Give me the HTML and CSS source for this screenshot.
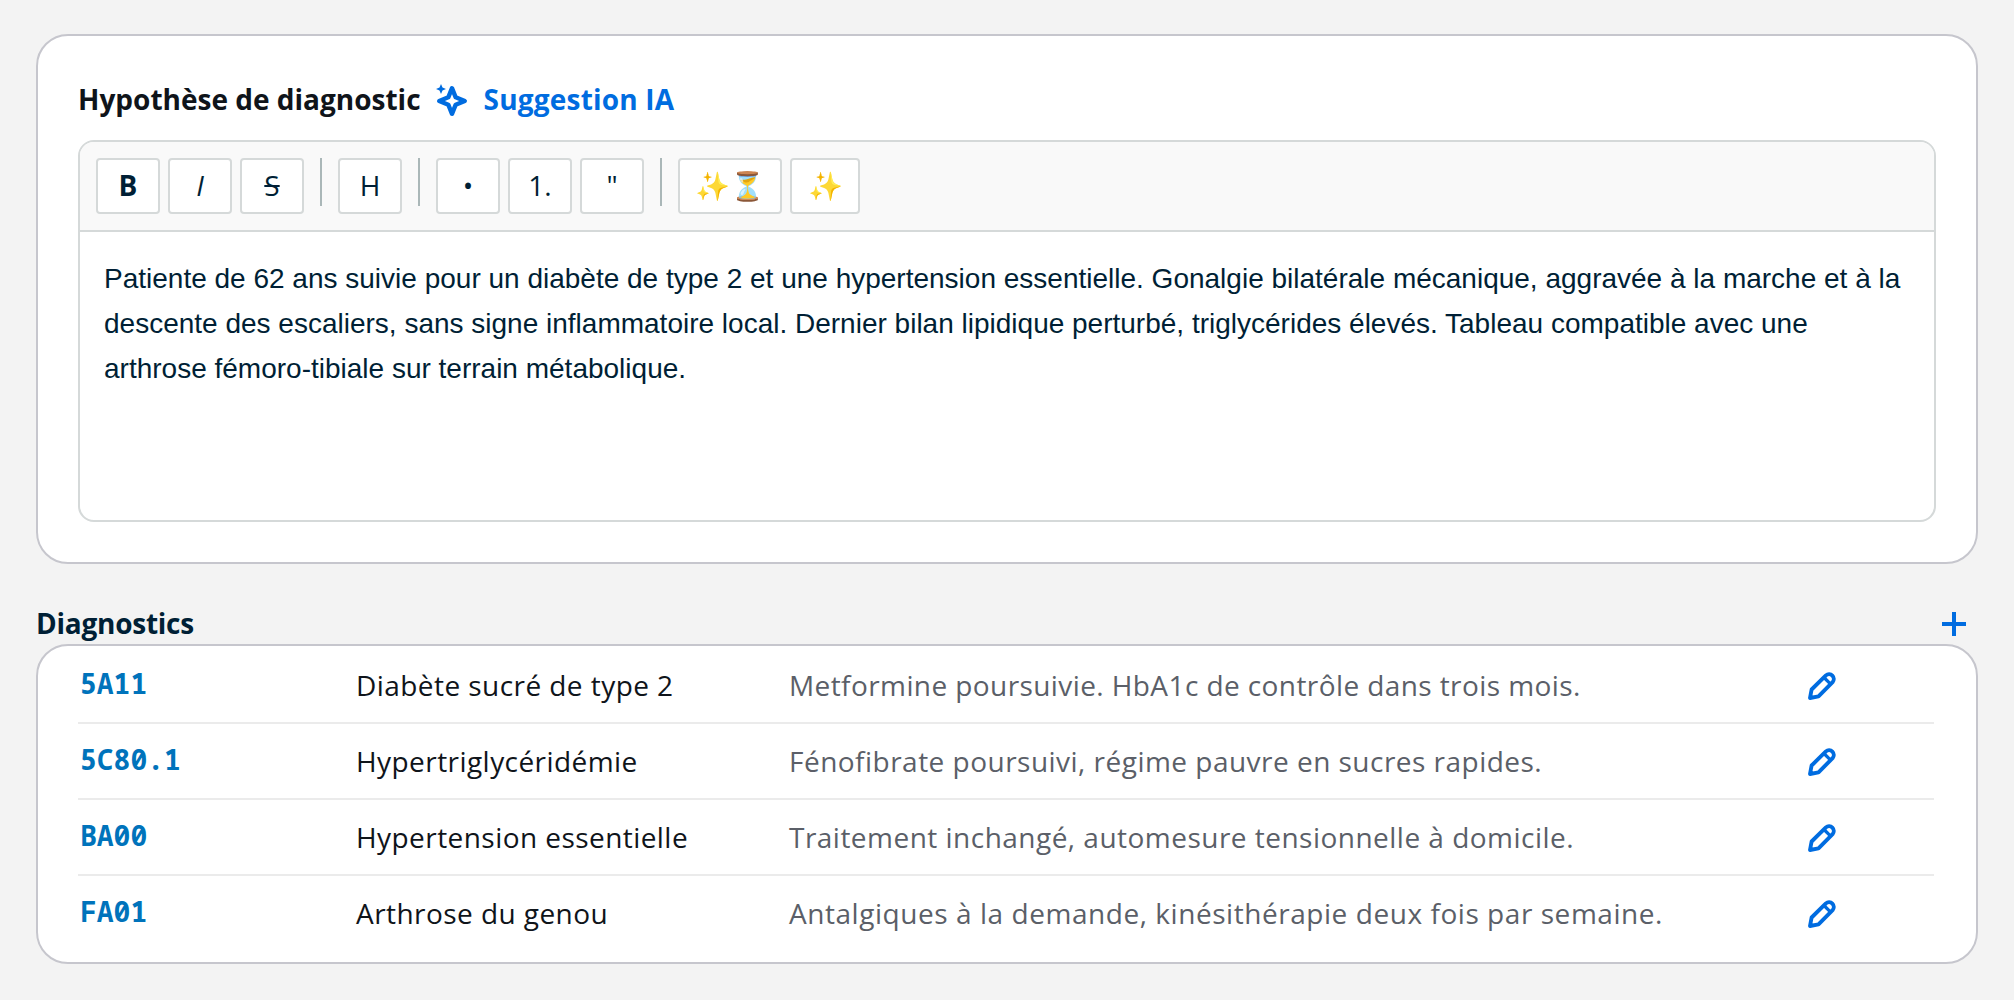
FILE: index.html
```html
<!DOCTYPE html>
<html lang="fr">
<head>
<meta charset="utf-8">
<title>Diagnostics</title>
<link rel="stylesheet" href="styles.css">
</head>
<body>
<svg class="defs" width="0" height="0">
  <symbol id="pencil" viewBox="0 0 28 28">
    <path d="M2 26l1.600-8.500L17.900 3.400a4.750 4.750 0 0 1 6.700 6.700L10.500 24.400z" fill="none" stroke="currentColor" stroke-width="3.900" stroke-linejoin="round"/>
    <path d="M16 5.500l6.600 6.600" fill="none" stroke="currentColor" stroke-width="3.200"/>
  </symbol>
</svg>
<section class="card hypothesis">
  <header class="hypothesis-head">
    <h2 class="title">Hypothèse de diagnostic</h2>
    <button class="suggest">
      <svg class="sparkle" viewBox="0 0 32 34"><path d="M16 4.200l3.700 9.100 9.100 3.700-9.100 3.700L16 29.800l-3.700-9.100L3.200 17l9.100-3.700z" fill="none" stroke="currentColor" stroke-width="4.400" stroke-linejoin="round"/><path d="M5 0l1.500 3.500L10 5 6.500 6.500 5 10 3.500 6.500 0 5l3.500-1.500z" fill="currentColor"/></svg>
      <span>Suggestion IA</span>
    </button>
  </header>
  <div class="editor">
    <div class="toolbar">
      <button class="tool bold">B</button>
      <button class="tool italic">I</button>
      <button class="tool strike">S</button>
      <span class="sep"></span>
      <button class="tool">H</button>
      <span class="sep"></span>
      <button class="tool">•</button>
      <button class="tool">1.</button>
      <button class="tool">"</button>
      <span class="sep"></span>
      <button class="tool pair">✨⏳</button>
      <button class="tool single">✨</button>
    </div>
    <div class="content">Patiente de 62 ans suivie pour un diabète de type 2 et une hypertension essentielle. Gonalgie bilatérale mécanique, aggravée à la marche et à la descente des escaliers, sans signe inflammatoire local. Dernier bilan lipidique perturbé, triglycérides élevés. Tableau compatible avec une arthrose fémoro-tibiale sur terrain métabolique.</div>
  </div>
</section>
<header class="list-head">
  <h2 class="title">Diagnostics</h2>
  <button class="add" aria-label="Ajouter"><svg viewBox="0 0 24 24"><path d="M12 0v24M0 12h24" stroke="currentColor" stroke-width="4"/></svg></button>
</header>
<section class="card list">
  <div class="row"><span class="code">5A11</span><span class="name">Diabète sucré de type 2</span><span class="note">Metformine poursuivie. HbA1c de contrôle dans trois mois.</span><button class="edit" aria-label="Modifier"><svg><use href="#pencil"/></svg></button></div>
  <div class="row"><span class="code">5C80.1</span><span class="name">Hypertriglycéridémie</span><span class="note">Fénofibrate poursuivi, régime pauvre en sucres rapides.</span><button class="edit" aria-label="Modifier"><svg><use href="#pencil"/></svg></button></div>
  <div class="row"><span class="code">BA00</span><span class="name">Hypertension essentielle</span><span class="note">Traitement inchangé, automesure tensionnelle à domicile.</span><button class="edit" aria-label="Modifier"><svg><use href="#pencil"/></svg></button></div>
  <div class="row"><span class="code">FA01</span><span class="name">Arthrose du genou</span><span class="note">Antalgiques à la demande, kinésithérapie deux fois par semaine.</span><button class="edit" aria-label="Modifier"><svg><use href="#pencil"/></svg></button></div>
</section>
</body>
</html>
```
FILE: styles.css
```css
* { box-sizing: border-box; }
body {
  margin: 0;
  padding: 34px 36px 0;
  height: 1000px;
  background: #f3f3f3;
  color: #0f141a;
  font-family: "Open Sans", sans-serif;
  font-size: 28px;
}
button {
  margin: 0;
  padding: 0;
  border: 0;
  background: none;
  font: inherit;
  color: #006ce0;
}
svg { display: block; }
.defs { position: absolute; }
.card {
  border: 2px solid #c6c6cd;
  border-radius: 32px;
  background: #fff;
}
.title { margin: 0; font-size: 28px; font-weight: 700; line-height: 38px; }
.hypothesis { height: 530px; padding: 44px 40px 40px; }
.hypothesis-head { display: flex; align-items: flex-start; height: 40px; margin-bottom: 20px; }
.suggest {
  display: flex;
  align-items: flex-start;
  gap: 16px;
  margin-left: 15px;
  font-weight: 700;
  line-height: 38px;
  letter-spacing: 0.2px;
}
.sparkle { width: 32px; height: 34px; margin-top: 4px; }
.editor {
  height: 382px;
  border: 2px solid #d5d9d9;
  border-radius: 16px;
  overflow: hidden;
}
.toolbar {
  display: flex;
  gap: 8px;
  height: 90px;
  padding: 16px;
  border-bottom: 2px solid #d5d9d9;
  background: #f9f9f9;
}
.tool {
  width: 64px;
  height: 56px;
  padding-bottom: 2px;
  border: 2px solid #d5d9d9;
  border-radius: 4px;
  background: #fff;
  color: #001f35;
  font-size: 28px;
  line-height: 38px;
  white-space: nowrap;
}
.pair { width: 104px; }
.single { width: 70px; }
.bold { font-weight: 700; }
.italic { font-style: italic; }
.strike { text-decoration: line-through; }
.sep { width: 2px; height: 48px; margin: 0 8px; background: #aab7b8; }
.content {
  padding: 24px;
  color: #001f35;
  font-family: "Liberation Sans", sans-serif;
  font-size: 28px;
  line-height: 45px;
}
.list-head { display: flex; justify-content: space-between; align-items: flex-start; height: 40px; margin-top: 40px; }
.list-head .title { color: #001f35; letter-spacing: -0.25px; }
.add { margin: 8px 12px 0 0; }
.add svg { width: 24px; height: 24px; }
.list { height: 320px; padding: 2px 42px 0 40px; }
.row {
  display: grid;
  grid-template-columns: 278px 433px 1019px 1fr;
  align-items: center;
  height: 76px;
  border-bottom: 2px solid #ebebeb;
}
.row:last-child { border-bottom-color: transparent; }
.code {
  padding: 0 0 4px 2px;
  color: #0073bb;
  font-family: "Noto Sans Mono", "DejaVu Sans Mono", monospace;
  font-weight: 700;
}
.name { letter-spacing: 0.44px; }
.note { color: #5b5f68; letter-spacing: 0.48px; }
.row:first-child .note { letter-spacing: 0.41px; }
.row:last-child .note { letter-spacing: 0.55px; }
.edit { padding-top: 2px; }
.edit svg { width: 28px; height: 28px; }
```
